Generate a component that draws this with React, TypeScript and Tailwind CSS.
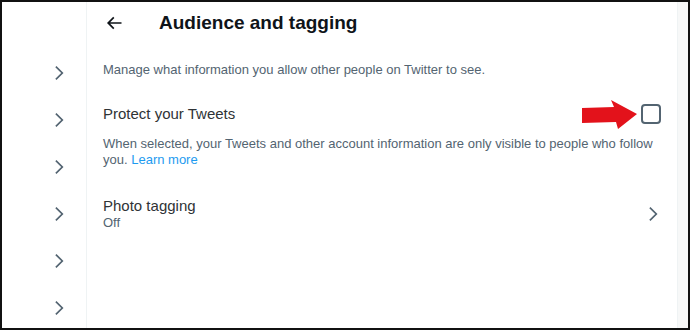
import { FunctionComponent } from 'react';

const Chevron: FunctionComponent<{ className?: string }> = ({ className }) => (
    <svg viewBox="0 0 24 24" className={className} fill="currentColor">
        <path d="M14.586 12L7.543 4.96l1.414-1.42L17.414 12l-8.457 8.46-1.414-1.42L14.586 12z" />
    </svg>
);

const App: FunctionComponent = () => {
    const rows = [0, 1, 2, 3, 4, 5];

    return (
        <div className="w-[690px] h-[330px] border-2 border-[#111] bg-white flex overflow-hidden font-['Liberation_Sans',Arial,sans-serif]">
            {/* settings menu column, cut off */}
            <div className="w-[84px] shrink-0 pt-[47px] pl-[47px] flex flex-col overflow-hidden text-[#536471]">
                {rows.map((r) => (
                    <div key={r} className="h-[47px] shrink-0 flex items-center">
                        <Chevron className="w-5 h-5" />
                    </div>
                ))}
            </div>

            <div className="w-[592px] shrink-0 border-l border-r border-[#eff3f4] relative">
                <div className="h-[41px] flex items-center pl-[17px]">
                    <div className="w-[55px] flex items-center text-[#0f1419]">
                        <svg viewBox="0 0 24 24" className="w-5 h-5" fill="currentColor">
                            <path d="M7.414 13l5.043 5.04-1.414 1.42L3.586 12l7.457-7.46 1.414 1.42L7.414 11H21v2H7.414z" />
                        </svg>
                    </div>
                    <h1 className="text-[19px] font-bold text-[#0f1419] leading-6">Audience and tagging</h1>
                </div>

                <p className="mt-[19px] px-4 text-[13px] leading-4 text-[#536471]">
                    Manage what information you allow other people on Twitter to see.
                </p>

                <div className="mt-[26px] px-4 flex items-center justify-between h-5">
                    <span className="text-[15px] text-[#2f3336]">Protect your Tweets</span>
                    <div className="w-5 h-5 border-2 border-[#536471] rounded-[4px]" />
                </div>

                <p className="mt-[12px] pl-4 pr-6 text-[13px] leading-4 text-[#536471]">
                    When selected, your Tweets and other account information are only visible to people who follow
                    you. <a className="text-[#1d9bf0]">Learn more</a>
                </p>

                <div className="mt-[29px] px-4 flex items-center justify-between">
                    <div className="flex flex-col">
                        <span className="text-[15px] leading-[18px] text-[#2f3336]">Photo tagging</span>
                        <span className="text-[13px] leading-4 text-[#536471]">Off</span>
                    </div>
                    <Chevron className="w-5 h-5 text-[#536471] mr-[-2px]" />
                </div>

                {/* red annotation arrow */}
                <svg viewBox="0 0 56 30" className="absolute left-[495px] top-[98px] w-[56px] h-[30px]">
                    <polygon points="0,8 32,7 29,0 55,14 36,29 34,22 0,23" fill="#e3121b" />
                </svg>
            </div>

            <div className="flex-1 bg-[#f7f8f8]" />
        </div>
    );
};

export default App;
